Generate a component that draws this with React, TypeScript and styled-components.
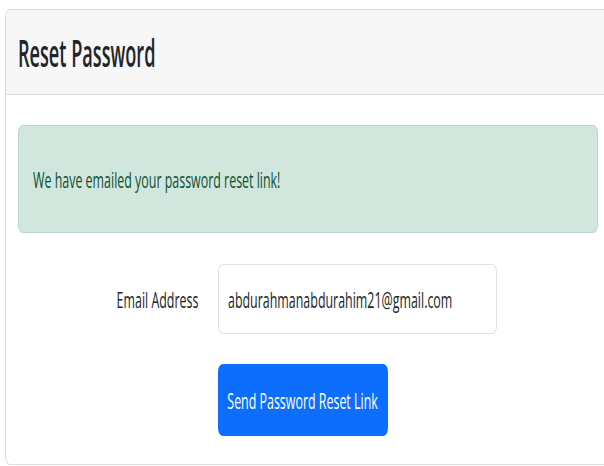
import styled, { createGlobalStyle } from 'styled-components'

// text on this page is set tall and narrow
const BODY_SQUEEZE = 0.555
const TITLE_SQUEEZE = 0.49

const GlobalStyle = createGlobalStyle`
  html, body {
    margin: 0;
    padding: 0;
    background: #fff;
    overflow: hidden;
  }
  body {
    font-family: "Open Sans", "Noto Sans", sans-serif;
    color: #212529;
  }
`

const Page = styled.div`
  padding: 9px 0 0 5px;
`

const Card = styled.div`
  width: 604px;
  background: #fff;
  border: 1px solid #dcdcdc;
  border-radius: 5px / 8px;
  overflow: hidden;
`

const CardHeader = styled.div`
  height: 84px;
  display: flex;
  align-items: center;
  padding: 0 12px;
  background: #f7f7f7;
  border-bottom: 1px solid #dcdcdc;
`

const Title = styled.h1`
  margin: 0;
  font-size: 37px;
  font-weight: 600;
  line-height: 1;
  color: #212529;
`

const Narrow = styled.span<{ $origin?: string; $squeeze?: number }>`
  display: inline-block;
  white-space: nowrap;
  transform: scaleX(${(p) => p.$squeeze ?? BODY_SQUEEZE});
  transform-origin: ${(p) => p.$origin ?? 'left'} center;
`

const CardBody = styled.div`
  padding: 30px 12px 28px 12px;
`

const Alert = styled.div`
  box-sizing: border-box;
  height: 108px;
  display: flex;
  align-items: center;
  padding: 0 14px;
  background: #d1e7dd;
  border: 1px solid #badbcc;
  border-radius: 5px / 8px;
  color: #0f5132;
  font-size: 22.4px;
`

const FormRow = styled.div`
  display: flex;
  align-items: center;
  gap: 20px;
  margin-top: 31px;
`

const Label = styled.label`
  width: 180px;
  text-align: right;
  font-size: 22.4px;
  color: #212529;
`

const InputBox = styled.div`
  box-sizing: border-box;
  width: 279px;
  height: 70px;
  display: flex;
  align-items: center;
  padding-left: 9px;
  border: 1px solid #dee2e6;
  border-radius: 5px / 8px;
  overflow: hidden;
  background: #fff;
`

const Input = styled.input`
  flex: none;
  width: ${Math.round(268 / BODY_SQUEEZE)}px;
  padding: 0;
  border: none;
  outline: none;
  background: transparent;
  font-family: inherit;
  font-size: 22.4px;
  color: #212529;
  transform: scaleX(${BODY_SQUEEZE});
  transform-origin: left center;
`

const ButtonRow = styled.div`
  margin-top: 30px;
  padding-left: 200px;
`

const SubmitButton = styled.button`
  width: 170px;
  height: 72px;
  display: flex;
  align-items: center;
  justify-content: center;
  padding: 0;
  border: none;
  border-radius: 5px / 8px;
  background: #0d6efd;
  color: #fff;
  font-family: inherit;
  font-size: 22.4px;
  cursor: pointer;
`

export default function App() {
  return (
    <>
      <GlobalStyle />
      <Page>
        <Card>
          <CardHeader>
            <Title>
              <Narrow $squeeze={TITLE_SQUEEZE}>Reset Password</Narrow>
            </Title>
          </CardHeader>
          <CardBody>
            <Alert role="alert">
              <Narrow>We have emailed your password reset link!</Narrow>
            </Alert>
            <FormRow>
              <Label htmlFor="email">
                <Narrow $origin="right">Email Address</Narrow>
              </Label>
              <InputBox>
                <Input id="email" type="email" defaultValue="abdurahmanabdurahim21@gmail.com" />
              </InputBox>
            </FormRow>
            <ButtonRow>
              <SubmitButton type="submit">
                <Narrow $origin="center">Send Password Reset Link</Narrow>
              </SubmitButton>
            </ButtonRow>
          </CardBody>
        </Card>
      </Page>
    </>
  )
}
